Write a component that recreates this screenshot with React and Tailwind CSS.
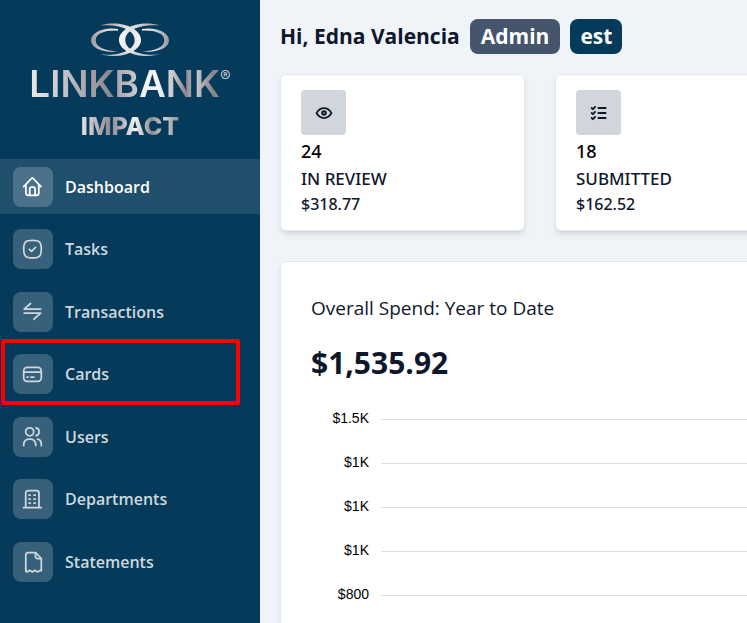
import clsx from "clsx";

const Icon = ({ children, className = "h-5 w-5" }) => (
  <svg
    viewBox="0 0 20 20"
    fill="none"
    stroke="currentColor"
    strokeWidth="1.75"
    strokeLinecap="round"
    strokeLinejoin="round"
    aria-hidden="true"
    className={clsx("overflow-visible", className)}
  >
    {children}
  </svg>
);

const HomeIcon = () => (
  <Icon>
    <path d="M.7 9.6 8.4 1.5a1.3 1.3 0 0 1 1.9 0L18 9.6" />
    <path d="M2.9 7.8v8.2a2.4 2.4 0 0 0 2.4 2.4h8.1a2.4 2.4 0 0 0 2.4-2.4V7.8" />
    <path d="M6.7 18.2v-6.1a2 2 0 0 1 2-2h1.4a2 2 0 0 1 2 2v6.1" />
  </Icon>
);

const TaskIcon = () => (
  <Icon>
    <path d="M.7 10C.7 3 2.500 1.300 9.500 1.300S18.300 3 18.300 10s-1.800 8.800-8.800 8.800S.7 17 .7 10Z" />
    <path d="m6.400 10.300 2.100 2 4.100-4" />
  </Icon>
);

const TransferIcon = () => (
  <Icon>
    <path d="M7.500 1.500 1.200 7.200h16.500" />
    <path d="M1.200 11h16.500L11 17.200" />
  </Icon>
);

const CardIcon = () => (
  <Icon>
    <rect x=".7" y="3.300" width="17.600" height="14" rx="3.500" />
    <path d="M.7 8h17.600M4 13h1M8 13h2.800" />
  </Icon>
);

const UsersIcon = () => (
  <Icon>
    <circle cx="6.700" cy="4.800" r="4" />
    <path d="M.7 18.500v-1.200A5.200 5.200 0 0 1 5.900 12.100h1.600a5.200 5.200 0 0 1 5.200 5.200v1.200" />
    <path d="M13 .9a4 4 0 0 1 0 7.800M14.600 12.200a5 5 0 0 1 3.700 5v1.300" />
  </Icon>
);

const BuildingIcon = () => (
  <Icon>
    <path d="M.5 18.700h17.700M2.700 18.700V4.200a2.500 2.500 0 0 1 2.500-2.500h8.300A2.500 2.500 0 0 1 16 4.200v14.500" />
    <path d="M6 6h1.200M11 6h1.200M6 10h1.200M11 10h1.200M6 14h1.200M11 14h1.200" />
  </Icon>
);

const StatementIcon = () => (
  <Icon>
    <path d="M2.800 18.500V3A2.300 2.300 0 0 1 5.100.7h7.500l5.700 5.800v12" />
    <path d="M12.500 1v3.600a1.900 1.900 0 0 0 1.900 1.900h3.600" />
    <path d="M2.800 18.500c.3 1.700 1.700 1.700 2.600.7s1.600-1 2.600 0 1.700 1 2.600 0 1.600-1 2.600 0 1.700 1 2.500 0 2.300-.3 2.600-.7" />
  </Icon>
);

const EyeIcon = () => (
  <Icon>
    <path d="M2.500 10c2-3.500 4.500-5 7.500-5s5.500 1.500 7.500 5c-2 3.500-4.500 5-7.500 5s-5.500-1.500-7.500-5Z" />
    <circle cx="10" cy="10" r="1.800" strokeWidth="2" />
  </Icon>
);

const ChecklistIcon = () => (
  <Icon>
    <path d="M8.700 5h8.600M8.700 10h8.600M8.700 15h8.600" strokeLinecap="butt" strokeWidth="1.800" />
    <path d="m2.600 5 1.300 1.200 2.200-2.400M2.600 10l1.300 1.200 2.200-2.400M2.600 15l1.300 1.200 2.200-2.400" />
  </Icon>
);

const Rings = () => (
  <svg viewBox="0 0 240 108" className="h-9 w-20" aria-hidden="true">
    <defs>
      <linearGradient id="silver">
        <stop offset="0" stopColor="#9b989f" />
        <stop offset="0.55" stopColor="#d5d5d8" />
        <stop offset="1" stopColor="#f6f6f6" />
      </linearGradient>
      <g id="ring" fill="url(#silver)">
        <path d="M84 21C40 14 3 31 3 55s36 39 80 33C46 87 17 76 17 55S46 24 84 26Z" />
        <path d="M30 10C94-7 153 20 153 54s-61 60-123 43c58 6 104-12 104-43S88 6 30 10Z" />
      </g>
    </defs>
    <use href="#ring" />
    <use href="#ring" transform="translate(240) scale(-1 1)" />
  </svg>
);

const Logo = () => (
  <div className="flex h-[159px] flex-col items-center pt-[22px] font-['Inter',sans-serif]">
    <Rings />
    <div className="flex items-start">
      <span className="bg-[linear-gradient(90deg,#e8e8e8_0%,#d8d8da_10%,#c0bfc3_20%,#8a868e_43%,#a9a7ad_46%,#c9c8cc_56%,#f2f2f2_60%,#f2f2f2_68%,#c4c2c7_76%,#8a868e_82%,#c4c2c7_88%,#8a868e_96%)] bg-clip-text text-[37px] font-semibold leading-[52px] text-transparent">
        LINKBANK
      </span>
      <span className="text-base leading-9 text-[#b9c3cc]">®</span>
    </div>
    <span className="bg-[linear-gradient(90deg,#e4e4e4_0%,#8f8b93_30%,#b5b2b8_42%,#f5f5f5_55%,#8f8b93_72%,#d0d0d3_85%,#8f8b93_100%)] bg-clip-text text-[25px] font-extrabold leading-8 text-transparent">
      IMPACT
    </span>
  </div>
);

const navItems = [
  { label: "Dashboard", icon: HomeIcon, active: true },
  { label: "Tasks", icon: TaskIcon },
  { label: "Transactions", icon: TransferIcon },
  { label: "Cards", icon: CardIcon, highlighted: true },
  { label: "Users", icon: UsersIcon },
  { label: "Departments", icon: BuildingIcon },
  { label: "Statements", icon: StatementIcon },
];

const stats = [
  { count: 24, label: "IN REVIEW", amount: "$318.77", icon: EyeIcon },
  { count: 18, label: "SUBMITTED", amount: "$162.52", icon: ChecklistIcon },
];

const ticks = ["$1.5K", "$1K", "$1K", "$1K", "$800"];

const Sidebar = () => (
  <aside className="w-[260px] shrink-0 bg-[#053a5a]">
    <Logo />
    <nav className="flex h-[430px] flex-col justify-between">
      {navItems.map(({ label, icon: NavIcon, active, highlighted }) => (
        <a
          key={label}
          href="#"
          className={clsx(
            "relative flex h-[55px] items-center gap-3 px-[13px] text-base font-semibold",
            active ? "bg-[#204f6e] text-white" : "text-[#cdd8de]"
          )}
        >
          <span className="flex h-10 w-10 items-center justify-center rounded-lg bg-white/20">
            <NavIcon />
          </span>
          {label}
          {highlighted && (
            <span className="absolute -bottom-[3px] -top-2 left-px right-5 rounded-xs border-4 border-[#fe0000]" />
          )}
        </a>
      ))}
    </nav>
  </aside>
);

const StatCard = ({ count, label, amount, icon: StatIcon }) => (
  <div className="w-[245px] shrink-0 rounded-md border border-slate-200 bg-white px-5 pb-3.5 pt-[15px] font-['Noto_Sans',sans-serif] text-[17px] font-medium shadow-md">
    <div className="mb-0.5 flex h-[45px] w-[45px] items-center justify-center rounded-sm bg-gray-300 text-[#111827]">
      <StatIcon />
    </div>
    <p className="text-lg leading-7 text-black">{count}</p>
    <p className="leading-[27px]">{label}</p>
    <p className="text-base leading-6">{amount}</p>
  </div>
);

const App = () => {
  return (
    <div className="flex min-h-screen overflow-hidden bg-[#f0f4f9] font-['Open_Sans',sans-serif] text-slate-900">
      <Sidebar />

      <main className="min-w-0 flex-1 pl-5 pt-[19px]">
        <h1 className="flex items-center gap-2.5 whitespace-nowrap text-[21px] font-bold leading-[35px]">
          Hi, Edna Valencia
          <span className="rounded-lg bg-slate-600 px-[11px] text-white">Admin</span>
          <span className="rounded-lg bg-[#053a5a] px-2.5 text-white">est</span>
        </h1>

        <div className="mt-5 flex gap-[30px]">
          {stats.map((stat) => (
            <StatCard key={stat.label} {...stat} />
          ))}
        </div>

        {/* Spend chart */}
        <section className="-mr-2 mt-[30px] h-full rounded-md border border-slate-200 bg-white pl-[30px] pt-8 shadow-md">
          <h2 className="text-[19px] leading-7">Overall Spend: Year to Date</h2>
          <p className="mt-[21px] text-[30px] font-bold leading-10">$1,535.92</p>
          <div className="mt-[13px] font-['Liberation_Sans',sans-serif] text-sm text-black">
            {ticks.map((tick, index) => (
              <div key={index} className="flex h-11 items-center gap-3">
                <span className="w-[58px] text-right">{tick}</span>
                <span className="mt-[3px] h-px flex-1 bg-[#e0e0e0]" />
              </div>
            ))}
          </div>
        </section>
      </main>
    </div>
  );
};

export default App;
